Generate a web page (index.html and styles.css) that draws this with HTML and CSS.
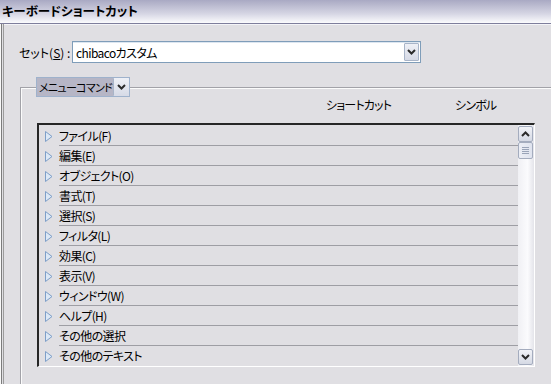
FILE: index.html
```html
<!DOCTYPE html>
<html lang="ja">
<head>
    <meta charset="UTF-8">
    <title>キーボードショートカット</title>
    <link rel="stylesheet" href="styles.css">
</head>
<body>
    <div class="window">
        <div class="titlebar">キーボードショートカット</div>

        <div class="content">
            <div class="set-row">
                <span class="set-label">セット(<u>S</u>) :</span>
                <div class="select">
                    <span class="select-text">chibacoカスタム</span>
                    <span class="drop-btn">
                        <svg width="9" height="6" viewBox="0 0 9 6"><polyline points="1,1 4.5,4.5 8,1" fill="none" stroke="#2b2b2b" stroke-width="2"/></svg>
                    </span>
                </div>
            </div>

            <div class="group">
                <div class="legend">
                    <span class="legend-text">メニューコマンド</span>
                    <span class="drop-btn legend-btn">
                        <svg width="9" height="6" viewBox="0 0 9 6"><polyline points="1,1 4.5,4.5 8,1" fill="none" stroke="#2b2b2b" stroke-width="2"/></svg>
                    </span>
                </div>

                <div class="headers">
                    <span class="col-shortcut">ショートカット</span>
                    <span class="col-symbol">シンボル</span>
                </div>

                <div class="listbox">
                    <div class="rows">
                        <div class="row"><svg class="tri" width="8" height="11" viewBox="0 0 8 11"><polygon points="0.5,0.5 7,5.5 0.5,10.5" fill="#dce8f6" stroke="#7e9fc8"/></svg><span class="label">ファイル(F)</span></div>
                        <div class="row"><svg class="tri" width="8" height="11" viewBox="0 0 8 11"><polygon points="0.5,0.5 7,5.5 0.5,10.5" fill="#dce8f6" stroke="#7e9fc8"/></svg><span class="label">編集(E)</span></div>
                        <div class="row"><svg class="tri" width="8" height="11" viewBox="0 0 8 11"><polygon points="0.5,0.5 7,5.5 0.5,10.5" fill="#dce8f6" stroke="#7e9fc8"/></svg><span class="label">オブジェクト(O)</span></div>
                        <div class="row"><svg class="tri" width="8" height="11" viewBox="0 0 8 11"><polygon points="0.5,0.5 7,5.5 0.5,10.5" fill="#dce8f6" stroke="#7e9fc8"/></svg><span class="label">書式(T)</span></div>
                        <div class="row"><svg class="tri" width="8" height="11" viewBox="0 0 8 11"><polygon points="0.5,0.5 7,5.5 0.5,10.5" fill="#dce8f6" stroke="#7e9fc8"/></svg><span class="label">選択(S)</span></div>
                        <div class="row"><svg class="tri" width="8" height="11" viewBox="0 0 8 11"><polygon points="0.5,0.5 7,5.5 0.5,10.5" fill="#dce8f6" stroke="#7e9fc8"/></svg><span class="label">フィルタ(L)</span></div>
                        <div class="row"><svg class="tri" width="8" height="11" viewBox="0 0 8 11"><polygon points="0.5,0.5 7,5.5 0.5,10.5" fill="#dce8f6" stroke="#7e9fc8"/></svg><span class="label">効果(C)</span></div>
                        <div class="row"><svg class="tri" width="8" height="11" viewBox="0 0 8 11"><polygon points="0.5,0.5 7,5.5 0.5,10.5" fill="#dce8f6" stroke="#7e9fc8"/></svg><span class="label">表示(V)</span></div>
                        <div class="row"><svg class="tri" width="8" height="11" viewBox="0 0 8 11"><polygon points="0.5,0.5 7,5.5 0.5,10.5" fill="#dce8f6" stroke="#7e9fc8"/></svg><span class="label">ウィンドウ(W)</span></div>
                        <div class="row"><svg class="tri" width="8" height="11" viewBox="0 0 8 11"><polygon points="0.5,0.5 7,5.5 0.5,10.5" fill="#dce8f6" stroke="#7e9fc8"/></svg><span class="label">ヘルプ(H)</span></div>
                        <div class="row"><svg class="tri" width="8" height="11" viewBox="0 0 8 11"><polygon points="0.5,0.5 7,5.5 0.5,10.5" fill="#dce8f6" stroke="#7e9fc8"/></svg><span class="label">その他の選択</span></div>
                        <div class="row last"><svg class="tri" width="8" height="11" viewBox="0 0 8 11"><polygon points="0.5,0.5 7,5.5 0.5,10.5" fill="#dce8f6" stroke="#7e9fc8"/></svg><span class="label">その他のテキスト</span></div>
                    </div>
                    <div class="scrollbar">
                        <span class="sb-btn">
                            <svg width="9" height="6" viewBox="0 0 9 6"><polyline points="1,5 4.5,1.5 8,5" fill="none" stroke="#2b2b2b" stroke-width="2"/></svg>
                        </span>
                        <span class="sb-thumb">
                            <svg width="7" height="7" viewBox="0 0 7 7"><path d="M0 0.5H7M0 2.5H7M0 4.5H7M0 6.5H7" stroke="#9aa4b8"/></svg>
                        </span>
                        <span class="sb-track"></span>
                        <span class="sb-btn">
                            <svg width="9" height="6" viewBox="0 0 9 6"><polyline points="1,1 4.5,4.5 8,1" fill="none" stroke="#2b2b2b" stroke-width="2"/></svg>
                        </span>
                    </div>
                </div>
            </div>
        </div>
    </div>
</body>
</html>
```

FILE: styles.css
```css
body {
    margin: 0;
    font-family: "Noto Sans CJK JP", sans-serif;
    font-size: 12px;
    font-feature-settings: "palt";
    color: #000;
    background: #e0dfe3;
}
.window {
    width: 551px;
    height: 384px;
    overflow: hidden;
    background: #e0dfe3;
    display: flex;
    flex-direction: column;
}
.titlebar {
    height: 23px;
    line-height: 22px;
    padding-left: 2px;
    font-size: 12.5px;
    font-weight: bold;
    background: linear-gradient(#a9a9c3, #d6d6e4 60%, #fbfbfd);
    border-bottom: 1px solid #7e7e9c;
    box-shadow: 0 1px #f4f4f8;
    flex-shrink: 0;
}
.content {
    flex: 1;
    padding-top: 17px;
    box-shadow: inset 1px 0 #f8f8f8, inset 2px 0 #7c7c7c, inset 3px 0 #e0dfe3, inset 4px 0 #9c9c9c;
}
.set-row {
    display: flex;
    align-items: center;
    height: 22px;
}
.set-label {
    width: 53px;
    padding-left: 19px;
    padding-top: 1px;
}
.select {
    width: 347px;
    height: 20px;
    border: 1px solid #7f9db9;
    background: #fff;
    display: flex;
    align-items: center;
    box-shadow: inset 0 1px #dde6f0;
}
.select-text {
    flex: 1;
    padding-left: 3px;
    padding-top: 1px;
    letter-spacing: -0.6px;
}
.drop-btn {
    width: 15px;
    height: 18px;
    margin-right: 1px;
    border: 1px solid #a8b4c8;
    border-radius: 1px;
    background: linear-gradient(#eef0f6, #d6dae6);
    display: flex;
    align-items: center;
    justify-content: center;
    box-sizing: border-box;
}
.group {
    margin: 24px 0 0 20px;
    flex: 1;
    border-top: 1px solid #a2a2a8;
    border-left: 1px solid #a2a2a8;
    box-shadow: inset 1px 1px #fbfbfb;
    height: 320px;
}
.legend {
    display: flex;
    width: 94px;
    height: 20px;
    margin: -11px 0 0 15px;
    border: 1px solid #9fb2cc;
    box-sizing: border-box;
    background: #e0dfe3;
}
.legend-text {
    flex: 1;
    background: #b6b6c6;
    line-height: 19px;
    padding-left: 2px;
    font-size: 11px;
    white-space: nowrap;
    overflow: hidden;
    letter-spacing: -0.7px;
}
.legend-btn {
    width: 16px;
    height: 18px;
    margin: 0;
    border-width: 0 0 0 1px;
    flex-shrink: 0;
}
.headers {
    display: flex;
    height: 26px;
    line-height: 16px;
    padding-left: 305px;
    letter-spacing: -0.8px;
}
.col-shortcut {
    width: 129px;
}
.listbox {
    display: flex;
    width: 498px;
    height: 244px;
    margin-left: 16px;
    box-sizing: border-box;
    border-style: solid;
    border-width: 2px 1px 1px 2px;
    border-color: #262626 #fff #fff #262626;
}
.rows {
    flex: 1;
    padding-top: 1px;
}
.row {
    display: flex;
    align-items: center;
    height: 20px;
}
.tri {
    margin: 1px 0 0 6px;
    flex-shrink: 0;
}
.label {
    flex: 1;
    margin-left: 6px;
    height: 19px;
    line-height: 20px;
    letter-spacing: -0.6px;
    border-bottom: 1px solid #9e9ea4;
}
.row.last .label {
    border-bottom-color: transparent;
}
.scrollbar {
    width: 16px;
    display: flex;
    flex-direction: column;
    padding-top: 1px;
    background: linear-gradient(90deg, #f0f0f4, #fbfbfd 60%, #e4e4ea);
}
.sb-btn, .sb-thumb {
    width: 15px;
    height: 16px;
    border: 1px solid #a4acbe;
    border-radius: 2px;
    background: linear-gradient(#f2f3f8, #d5d9e4);
    box-sizing: border-box;
    display: flex;
    align-items: center;
    justify-content: center;
}
.sb-thumb {
    height: 17px;
    background: linear-gradient(90deg, #eceef5, #dfe3ee);
}
.sb-track {
    flex: 1;
}
.sb-btn:last-child {
    margin-bottom: 1px;
}
```
